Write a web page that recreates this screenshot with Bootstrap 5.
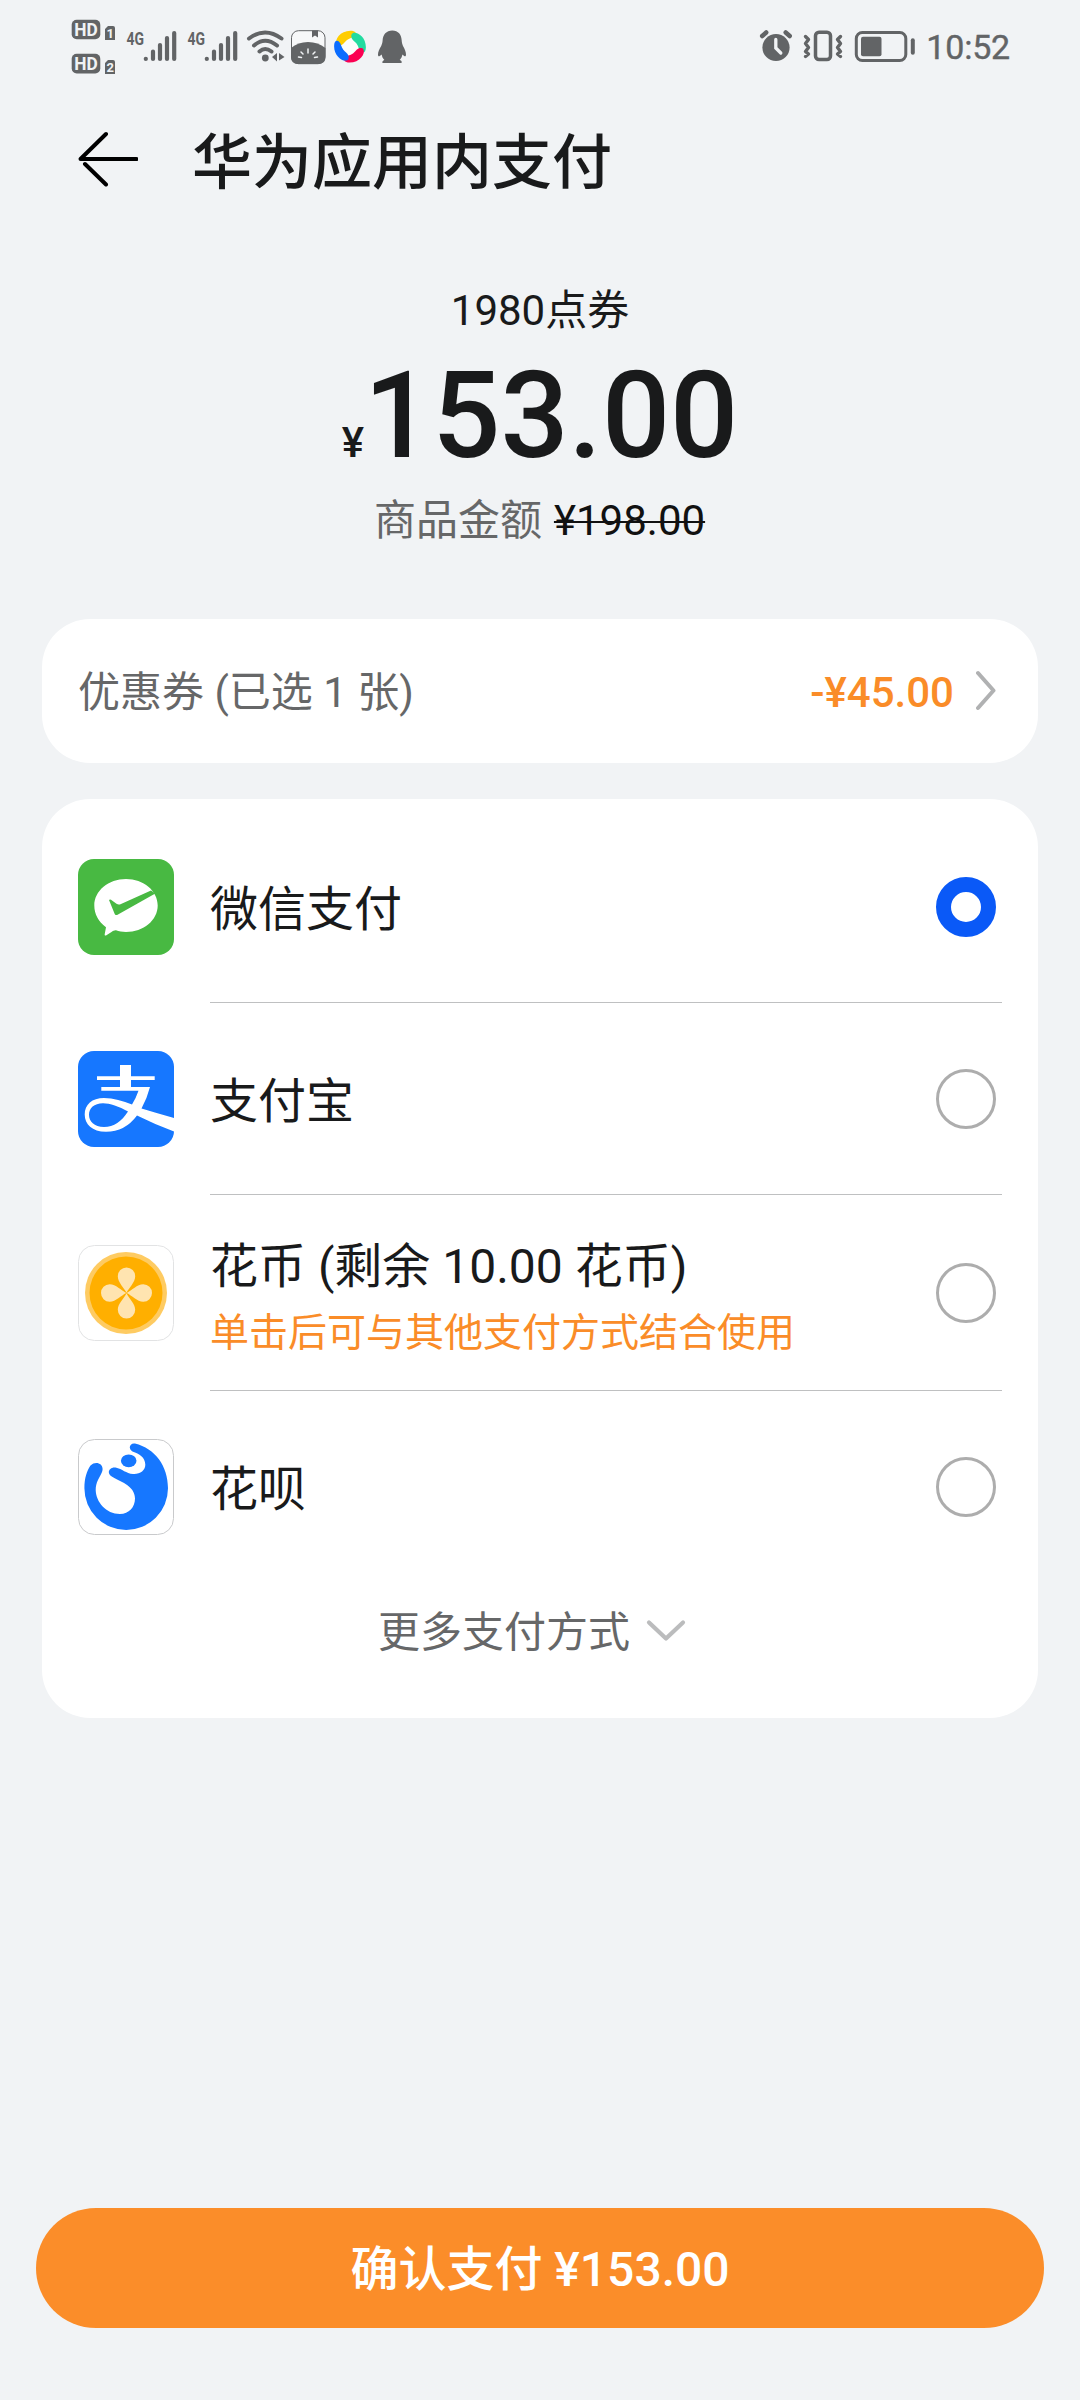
<!DOCTYPE html>
<html lang="zh-CN">
<head>
<meta charset="utf-8">
<meta name="viewport" content="width=device-width, initial-scale=1">
<title>华为应用内支付</title>
<link href="https://cdn.jsdelivr.net/npm/bootstrap@5.3.0/dist/css/bootstrap.min.css" rel="stylesheet">
<style>
  body { background: #f1f3f5; color: #191a1b; font-family: Roboto, "Noto Sans CJK SC", sans-serif; font-size: 42px; line-height: 60px; }
  svg { display: block; flex: none; }
  .screen { width: 1080px; height: 2400px; }
  .status { height: 90px; color: #626466; padding: 0 70px 0 68px; }
  .clock { font-size: 34px; line-height: 94px; font-weight: 400; letter-spacing: -.2px; -webkit-text-stroke: .4px currentColor; }
  .topbar { height: 140px; padding: 0 78px; gap: 54px; }
  .topbar h1 { font-size: 60px; line-height: 140px; font-weight: 500; margin: 7px 0 0; }
  .summary { height: 389px; padding-top: 51px; }
  .total { height: 146px; line-height: 150px; font-weight: 500; }
  .total .num { font-size: 120px; }
  .muted { color: #666768; }
  .price { padding-top: 4px; padding-right: 1px; }
  .strike { color: #111; margin-left: 12px; text-decoration-thickness: 2px; }
  .panel { margin: 0 42px 36px; border: 0; border-radius: 48px; background: #fff; color: inherit; }
  .coupon { height: 144px; padding: 0 42px 0 36px; }
  .coupon span { padding-top: 4px; }
  .coupon .amount { font-weight: 500; margin-right: 22px; }
  .orange { color: #fa8c28; }
  .methods { padding: 12px 36px 0; height: 919px; }
  .method { height: 192px; gap: 36px; }
  .method.tall { height: 196px; }
  .method .body { border-bottom: 1px solid #bfc0c1; padding-right: 6px; font-size: 48px; line-height: 64px; }
  .method .label { padding-top: 7px; }
  .method.tall .label { padding-top: 10px; }
  .method .last { border-color: transparent; }
  .method .hint { font-size: 39px; line-height: 56px; margin-top: 6px; }
  .method .pay { width: 96px; height: 96px; }
  .pick { width: 60px; height: 60px; margin: 0; border: 3px solid #adadad; flex: none; background: #fff; float: none; }
  .pick:checked { background: #fff; border: 15px solid #0a59f7; }
  .more { height: 96px; gap: 15px; padding-right: 15px; }
  .more span { padding-top: 4px; }
  .confirm { margin: auto 36px 72px; height: 120px; padding-top: 10px; border: 0; border-radius: 60px; background: #fb8d29; color: #fff; font-size: 48px; font-weight: 500; }
</style>
<script src="https://cdn.jsdelivr.net/npm/bootstrap@5.3.0/dist/js/bootstrap.bundle.min.js"></script>
</head>
<body>
<main class="screen d-flex flex-column overflow-hidden">

  <header class="status d-flex justify-content-between">
    <div class="d-flex">
      <!-- dual SIM badges -->
      <svg width="52" height="90" viewBox="68 0 52 90" fill="currentColor" font-family="Roboto" font-weight="700">
        <rect x="71.7" y="19.7" width="28.6" height="19.6" rx="5"/><rect x="71.7" y="53.8" width="28.6" height="19.6" rx="5"/>
        <path d="M105 29l3-3h5a2 2 0 0 1 2 2v12h-10zM105 63l3-3h5a2 2 0 0 1 2 2v12h-10z"/>
        <g fill="#f1f3f5"><text x="74.2" y="36" font-size="18.5" textLength="23.5" lengthAdjust="spacingAndGlyphs">HD</text><text x="74.2" y="70" font-size="18.5" textLength="23.5" lengthAdjust="spacingAndGlyphs">HD</text>
        <text x="106.4" y="38" font-size="13">1</text><text x="106.4" y="72" font-size="13">2</text></g>
      </svg>
      <!-- signal 1 -->
      <svg width="61" height="90" viewBox="120 0 61 90" fill="none" stroke="currentColor" stroke-width="4.2" stroke-linecap="round">
        <text x="126.6" y="44.5" font-size="19" font-weight="700" font-family="Roboto" fill="currentColor" stroke="none" textLength="17.5" lengthAdjust="spacingAndGlyphs">4G</text>
        <path d="M145.8 58.8v.1M153 51.5V59M160 45V59M167 38V59M174.2 33V59"/>
      </svg>
      <!-- signal 2 -->
      <svg width="61" height="90" viewBox="120 0 61 90" fill="none" stroke="currentColor" stroke-width="4.2" stroke-linecap="round">
        <text x="126.6" y="44.5" font-size="19" font-weight="700" font-family="Roboto" fill="currentColor" stroke="none" textLength="17.5" lengthAdjust="spacingAndGlyphs">4G</text>
        <path d="M145.8 58.8v.1M153 51.5V59M160 45V59M167 38V59M174.2 33V59"/>
      </svg>
      <!-- wifi -->
      <svg width="46" height="90" viewBox="242 0 46 90" fill="none" stroke="currentColor" stroke-width="4" stroke-linecap="round">
        <path d="M249 38.500Q265 26.500 281.500 38.500M254 45.500Q265 36 277 45.500M259.500 51.500Q265 46.500 271.500 51.500"/>
        <circle cx="265.300" cy="58" r="3.400" fill="currentColor" stroke="none"/>
        <path d="M277 53v8.500l-5-4.500zM279 60.500V53l5.500 4z" fill="currentColor" stroke="none"/>
      </svg>
      <!-- notebook app -->
      <svg width="42" height="90" viewBox="288 0 42 90">
        <rect x="291.500" y="30.700" width="33.500" height="33" rx="7" fill="#f7f8f9" stroke="currentColor"/>
        <path d="M312 30.500h6v7l-3-2-3 2z" fill="currentColor"/>
        <path d="M291 48Q298 42 308 42t17.500 6v9q0 7-7 7H298q-7 0-7-7z" fill="currentColor"/>
        <path d="M298.500 57l3 .5M301 52l2 2M308 49v4M315 52l-2 2M317.500 57l-3 .5" stroke="#f1f3f5" stroke-width="1.500" stroke-linecap="round"/>
      </svg>
      <!-- pinwheel app -->
      <svg width="42" height="90" viewBox="330 0 42 90">
        <defs><path id="blade" d="M336.500 44C334.500 40 340 30.800 350.500 30.800c5 0 6.500 2.500 4.500 5-2 2.200-5 2-8 4.200-2.500 1.800-3 4-5.500 5-2 .7-4.200.6-5-1z"/></defs>
        <circle cx="350" cy="46.700" r="9" fill="#fbfcfc"/>
        <use href="#blade" fill="#ffcd00"/>
        <use href="#blade" fill="#23dba0" transform="rotate(90 350 46.700)"/>
        <use href="#blade" fill="#fb0052" transform="rotate(180 350 46.700)"/>
        <use href="#blade" fill="#0a6cff" transform="rotate(270 350 46.700)"/>
      </svg>
      <!-- penguin -->
      <svg width="40" height="90" viewBox="372 0 40 90" fill="currentColor">
        <path d="M392.300 30.500c6 0 9.200 4.300 9.400 10 .1 2 .5 3.500 1.300 5.500 1.800 3 3 6 3 8.500 0 2.500-1.300 2.300-3.600 0-.5 2.500-1.300 4-2.700 5.500 2 .8 2.300 1.500 1.800 3H382.500c-.5-1.500.3-2.200 1.900-3-1.500-1.500-2.300-3-2.700-5.500-2.500 2.300-3.700 2.500-3.700 0 0-2.500 1.300-5.500 3.200-8.500.8-2 1.300-3.500 1.400-5.500.3-5.700 3.700-10 9.700-10z"/>
      </svg>
    </div>
    <div class="d-flex">
      <!-- alarm -->
      <svg width="42" height="90" viewBox="756 0 42 90" fill="none" stroke="currentColor" stroke-linecap="round">
        <circle cx="776" cy="47.500" r="13.600" fill="currentColor" stroke="none"/>
        <path d="M762.200 36l4-3.500M789.700 36l-4-3.500" stroke-width="4.500"/><path d="M775.800 39.500v8.500l5 5" stroke="#f1f3f5" stroke-width="3.300"/>
      </svg>
      <!-- vibrate -->
      <svg width="52" height="90" viewBox="798 0 52 90" fill="none" stroke="currentColor" stroke-width="3.500" stroke-linejoin="round" stroke-linecap="round">
        <rect x="815.500" y="32.300" width="15" height="27.200" rx="3.500"/>
        <path d="M805.500 36.500l3 3-3 4 3 4-3 4 3 2.500-3 2.500M840.500 36.500l-3 3 3 4-3 4 3 4-3 2.500 3 2.500" stroke-width="3.400"/>
      </svg>
      <!-- battery -->
      <svg width="76" height="90" viewBox="850 0 76 90" fill="none" stroke="currentColor" stroke-width="3">
        <rect x="856.300" y="32.500" width="49.500" height="28" rx="6"/>
        <rect x="861" y="36.700" width="20.500" height="19.500" rx="2" fill="currentColor" stroke="none"/>
        <path d="M912.800 40.300v12.500" stroke-width="4" stroke-linecap="round"/>
      </svg>
      <span class="clock">10:52</span>
    </div>
  </header>

  <nav class="topbar d-flex align-items-center">
    <svg width="60" height="60" viewBox="0 0 60 60" fill="none" stroke="#000" stroke-width="4" stroke-linecap="round" stroke-linejoin="round"><path d="M58.500 29H2.500L28 4M7 34l21 20.500"/></svg>
    <h1>华为应用内支付</h1>
  </nav>

  <section class="summary text-center">
    <div>1980点券</div>
    <div class="total"><span>¥</span><span class="num">153.00</span></div>
    <div class="price"><span class="muted">商品金额</span><del class="strike">¥198.00</del></div>
  </section>

  <section class="panel coupon d-flex align-items-center">
    <span class="muted me-auto">优惠券 (已选 1 张)</span>
    <span class="orange amount">-¥45.00</span>
    <svg width="20" height="42" viewBox="0 0 20 42" fill="none" stroke="#b0b1b2" stroke-width="4" stroke-linecap="round" stroke-linejoin="round"><path d="M2 3l15.500 17.500L2 38"/></svg>
  </section>

  <section class="panel methods">
    <label class="method d-flex align-items-center">
      <svg class="pay" viewBox="0 0 96 96"><rect width="96" height="96" rx="16" fill="#48b942"/>
        <path d="M48 20c17.500 0 31.700 11.800 31.700 26.500S65.500 73 48 73c-4 0-7-.6-10-1.700-1.500-.2-3 .7-4.500 1.700l-5.500 3.500c-1 .3-1.500-.2-1.300-1.300l1.300-7C20.500 63 16.300 55 16.300 46.500 16.300 31.800 30.500 20 48 20z" fill="#fff"/>
        <path d="M31 41c.8-1 2-.5 3 .4l4.500 3.300c1.500 1 3 .9 4.500.2L73 31.500l4.300 3L40 55.500c-1.700 1-2.800.7-3.500-1z" fill="#48b942"/></svg>
      <div class="body d-flex align-items-center justify-content-between flex-fill align-self-stretch"><div class="label">微信支付</div><input class="form-check-input pick rounded-circle" type="radio" name="pay" checked></div>
    </label>
    <label class="method d-flex align-items-center">
      <svg class="pay" viewBox="0 0 96 96"><clipPath id="tile"><rect width="96" height="96" rx="16"/></clipPath><rect width="96" height="96" rx="16" fill="#1677ff"/>
        <g fill="#fff" clip-path="url(#tile)"><path d="M42 14h11v11.300h23.700V29H53v7h19q-3 11.500-8.500 21.500Q80 62.500 96 67v13.500Q76 73 59 64.500 47 80.800 28 80.800C14 80.800 6.700 73 6.700 63.500 6.700 53.500 14 47 26 47c9.500 0 19 3 28 6.500q4-6.500 6.500-13.800H23.300V36H42v-7H19v-3.700h23zM50 60.500C41 55.500 32 52.300 25 52.300c-9 0-14 5-14 11.500S16 76 26 76c10 0 17.500-5.500 24-15.500z" fill-rule="evenodd"/></g></svg>
      <div class="body d-flex align-items-center justify-content-between flex-fill align-self-stretch"><div class="label">支付宝</div><input class="form-check-input pick rounded-circle" type="radio" name="pay"></div>
    </label>
    <label class="method tall d-flex align-items-center">
      <svg class="pay" viewBox="0 0 96 96"><rect x=".5" y=".5" width="95" height="95" rx="16" fill="#fff" stroke="#e2e3e4"/>
        <circle cx="48" cy="48" r="41" fill="#fecb62"/><circle cx="48" cy="48" r="36.500" fill="#ffaf00"/>
        <g fill="#ffe4b0"><path id="petal" d="M48.500 47.800C46 42.500 39.800 37.500 39.800 31.200a8.700 8.700 0 0 1 17.400 0C57.200 37.500 51 42.500 48.500 47.800z"/><use href="#petal" transform="rotate(90 48.500 48)"/><use href="#petal" transform="rotate(180 48.500 48)"/><use href="#petal" transform="rotate(270 48.500 48)"/></g></svg>
      <div class="body d-flex align-items-center justify-content-between flex-fill align-self-stretch"><div class="label"><div>花币 (剩余 10.00 花币)</div><div class="hint orange">单击后可与其他支付方式结合使用</div></div><input class="form-check-input pick rounded-circle" type="radio" name="pay"></div>
    </label>
    <label class="method d-flex align-items-center">
      <svg class="pay" viewBox="0 0 96 96"><rect x=".5" y=".5" width="95" height="95" rx="16" fill="#fff" stroke="#c9cacc"/>
        <g fill="#1677ff"><path d="M57 4.600C77 9.500 90 27 90 49.200a41.800 41.800 0 0 1-83.600 0C6.400 39 9 31.500 12.500 26.500 18 21 27 25 24 33c-2.500 6-6.300 10-6.300 18C18 63 28 75 42 75c9 0 15-7 15-15.500C57 46 41 42.500 33 37c-5-4-.5-9.500 4.500-8.500 7 1.500 10.500 6 17.500 6.500 7 .5 12.500-3.500 12.300-9.500C67 18 61.500 15 54.500 12.500 49.500 9.500 52 3.700 57 4.600z"/><ellipse cx="50.700" cy="21.800" rx="7.800" ry="6.400"/></g></svg>
      <div class="body last d-flex align-items-center justify-content-between flex-fill align-self-stretch"><div class="label">花呗</div><input class="form-check-input pick rounded-circle" type="radio" name="pay"></div>
    </label>
    <div class="more d-flex align-items-center justify-content-center muted">
      <span>更多支付方式</span>
      <svg width="42" height="24" viewBox="0 0 42 24" fill="none" stroke="#bbbcbd" stroke-width="4.200" stroke-linecap="round" stroke-linejoin="round"><path d="M4 3.500l17 16 17-16"/></svg>
    </div>
  </section>

  <button class="confirm btn" type="button">确认支付 ¥153.00</button>
</main>
</body>
</html>
